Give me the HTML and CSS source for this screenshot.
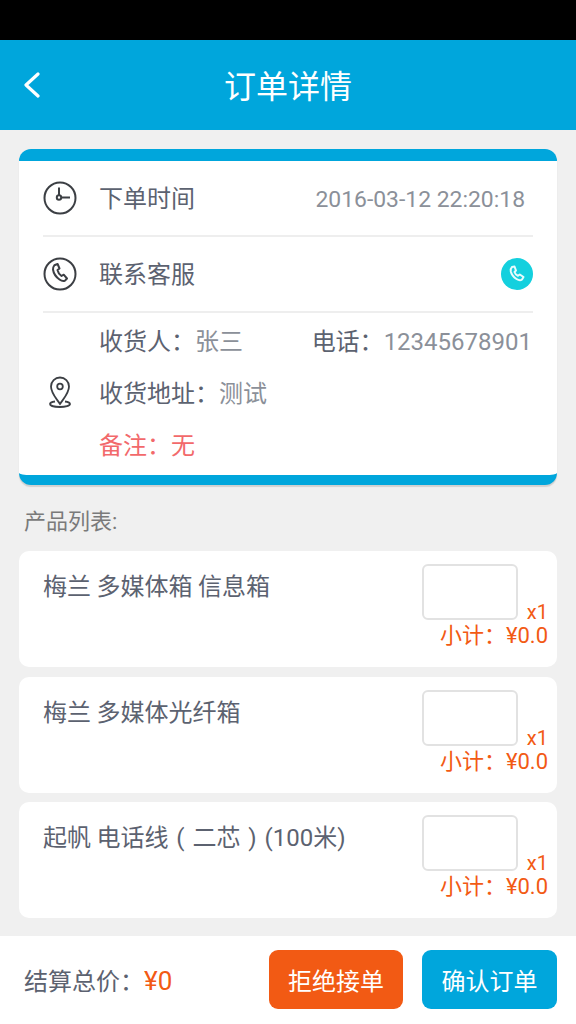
FILE: index.html
```html
<!DOCTYPE html>
<html lang="zh-CN">
<head>
  <meta charset="UTF-8" />
  <meta name="viewport" content="width=device-width, initial-scale=1.0"/>
  <title>订单详情</title>
  <link rel="stylesheet" href="styles.css">
</head>
<body>
  <div class="page">
    <div class="status-bar"></div>
    <div class="topbar">
      <svg class="back-icon" viewBox="0 0 18 26" fill="none" stroke="#fff" stroke-width="3.2" stroke-linecap="round" stroke-linejoin="round"><path d="M15 2 3 13l12 11"/></svg>
      <span class="topbar-title">订单详情</span>
    </div>

    <div class="content">
      <div class="order-card">
        <div class="order-row">
          <svg class="row-icon" viewBox="0 0 34 34" fill="none" stroke="#3c3f44" stroke-width="2"><circle cx="17" cy="17" r="15.500"/><path d="M16 6.500v8M18.500 16.500h8.500"/><circle cx="16" cy="16.500" r="2.200"/></svg>
          <span class="row-label">下单时间</span>
          <span class="row-value">2016-03-12 22:20:18</span>
        </div>
        <div class="order-row">
          <svg class="row-icon" viewBox="0 0 34 34" fill="none" stroke="#3c3f44" stroke-width="2"><circle cx="17" cy="17" r="15.500"/><path transform="translate(0 -1.500)" d="M12 9.500 14.600 8.500 16.500 13l-2 1.500c.5 2.500 1.800 4.500 4 6l2.200-1.300 3.300 3.800-2 2.200c-1.500.8-3.500.3-5.500-1.200-3.500-2.500-6-6.500-6.500-10-.2-1.800.4-3 1.500-4.500z" stroke-linejoin="round"/></svg>
          <span class="row-label">联系客服</span>
          <span class="call-btn">
            <svg viewBox="0 0 20 20" fill="none" stroke="#e8fbfc" stroke-width="2" stroke-linejoin="round"><path d="M5 3 7.500 2.500 9 6.500 7.500 8c.5 1.500 1.800 3 3.500 3.800L12.800 10.500 16.500 13 15 15.500c-1.500 1.200-3.500.8-5.500-.5-2.700-1.700-5-4.500-5.700-7.500C3.500 5.800 4 4 5 3z"/></svg>
          </span>
        </div>
        <div class="address-block">
          <svg class="pin-icon" viewBox="0 0 24 34" fill="none" stroke="#3c3f44" stroke-width="1.800"><path d="M12 29C8 23 3 18 3 11.500a9 9 0 0 1 18 0C21 18 16 23 12 29z"/><circle cx="12" cy="11.500" r="2.800"/><path d="M7 26.500C3.500 27 2 28 2 29c0 1.700 4.500 3 10 3s10-1.300 10-3c0-1-1.500-2-5-2.500"/></svg>
          <div class="address-lines">
            <div class="address-line">
              <span><span class="row-label">收货人：</span><span class="row-value">张三</span></span>
              <span><span class="row-label">电话：</span><span class="row-value">12345678901</span></span>
            </div>
            <div class="address-line"><span><span class="row-label">收货地址：</span><span class="row-value">测试</span></span></div>
            <div class="address-line remark">备注：无</div>
          </div>
        </div>
      </div>

      <div class="list-title">产品列表:</div>

      <div class="product-card">
        <div class="product-name">梅兰 多媒体箱 信息箱</div>
        <div class="product-side">
          <div class="qty-row"><div class="qty-box"></div><span class="qty">x1</span></div>
          <div class="subtotal">小计：¥0.0</div>
        </div>
      </div>
      <div class="product-card">
        <div class="product-name">梅兰 多媒体光纤箱</div>
        <div class="product-side">
          <div class="qty-row"><div class="qty-box"></div><span class="qty">x1</span></div>
          <div class="subtotal">小计：¥0.0</div>
        </div>
      </div>
      <div class="product-card">
        <div class="product-name">起帆 电话线<span class="paren">(</span>二芯<span class="paren">)</span>(100米)</div>
        <div class="product-side">
          <div class="qty-row"><div class="qty-box"></div><span class="qty">x1</span></div>
          <div class="subtotal">小计：¥0.0</div>
        </div>
      </div>
    </div>

    <div class="footer">
      <div class="total"><span class="total-label">结算总价：</span><span class="total-price">¥0</span></div>
      <button class="footer-btn reject">拒绝接单</button>
      <button class="footer-btn confirm">确认订单</button>
    </div>
  </div>
</body>
</html>
```

FILE: styles.css
```css
:root {
  --blue: #00a6dc;
  --orange: #f25a14;
  --text: #5c6270;
  --muted: #8b9099;
  --line: #eeeeee;
  --bg: #f0f0f0;
}
* { box-sizing: border-box; margin: 0; padding: 0; }
body {
  background: var(--bg);
  font-family: Roboto, "Noto Sans CJK SC", sans-serif;
  color: var(--text);
}
.page {
  height: 1024px;
  display: flex;
  flex-direction: column;
  overflow: hidden;
}
.status-bar {
  height: 40px;
  background: #000;
}
.topbar {
  height: 90px;
  padding-bottom: 2px;
  background: var(--blue);
  display: flex;
  align-items: center;
  justify-content: center;
  position: relative;
}
.back-icon {
  position: absolute;
  left: 23px;
  top: 32px;
  width: 18px;
  height: 26px;
}
.topbar-title {
  font-size: 32px;
  color: #fff;
}
.content {
  flex: 1;
  padding: 19px 19px 0;
}
.order-card {
  background: #fff;
  border-top: 12px solid var(--blue);
  border-bottom: 10px solid var(--blue);
  border-radius: 12px;
  box-shadow: 0 2px 1px #d0d0d0;
  padding: 0 24px;
}
.order-row {
  height: 76px;
  display: flex;
  align-items: center;
  border-bottom: 2px solid var(--line);
}
.order-row .row-label {
  margin-bottom: 3px;
}
.row-icon {
  width: 34px;
  height: 34px;
  margin-right: 22px;
  flex: none;
}
.row-label {
  font-size: 24px;
  color: var(--text);
}
.row-value {
  font-size: 24px;
  color: var(--muted);
}
.order-row .row-value {
  margin-left: auto;
  margin-right: 8px;
  padding-top: 3px;
  font-size: 22.900px;
}
.call-btn {
  width: 32px;
  height: 32px;
  margin-left: auto;
  border-radius: 50%;
  background: #14d0de;
  display: flex;
  align-items: center;
  justify-content: center;
}
.call-btn svg {
  width: 20px;
  height: 20px;
}
.address-block {
  height: 162px;
  padding-bottom: 5px;
  display: flex;
  align-items: center;
}
.pin-icon {
  width: 24px;
  height: 34px;
  margin: 0 27px 0 5px;
  flex: none;
}
.address-lines {
  flex: 1;
  padding-right: 1px;
  display: flex;
  flex-direction: column;
}
.address-line {
  height: 52px;
  display: flex;
  align-items: center;
  justify-content: space-between;
  white-space: nowrap;
}
.remark {
  font-size: 24px;
  color: #f2696b;
}
.list-title {
  font-size: 22px;
  color: #7a7a7a;
  height: 66px;
  line-height: 74px;
  padding-left: 5px;
}
.product-card {
  height: 116px;
  margin-bottom: 9.600px;
  background: #fff;
  border-radius: 10px;
  padding: 13px 9px 0 24px;
  display: flex;
  justify-content: space-between;
}
.product-name {
  font-size: 24px;
  line-height: 46px;
  word-spacing: -0.500px;
  color: var(--text);
  white-space: nowrap;
}
.paren {
  display: inline-block;
  width: 24px;
  text-align: center;
}
.product-side {
  display: flex;
  flex-direction: column;
  align-items: flex-end;
}
.qty-row {
  display: flex;
  align-items: flex-end;
  gap: 9px;
}
.qty-box {
  width: 96px;
  height: 56px;
  border: 2px solid #e2e2e2;
  border-radius: 6px;
  background: #fff;
}
.qty {
  font-size: 20px;
  line-height: 16px;
  color: var(--orange);
}
.subtotal {
  margin-top: 2px;
  font-size: 22px;
  line-height: 28px;
  color: var(--orange);
}
.footer {
  height: 88px;
  background: #fff;
  padding: 14px 19px 0 24px;
  display: flex;
  align-items: flex-start;
  gap: 19px;
}
.total {
  flex: 1;
  line-height: 62px;
}
.total-label {
  font-size: 24px;
  color: var(--text);
}
.total-price {
  font-size: 26px;
  color: var(--orange);
}
.footer-btn {
  height: 59px;
  border: none;
  border-radius: 9px;
  font-family: inherit;
  font-size: 24px;
  color: #fff;
}
.reject { width: 134px; background: var(--orange); }
.confirm { width: 135px; background: var(--blue); }
```
